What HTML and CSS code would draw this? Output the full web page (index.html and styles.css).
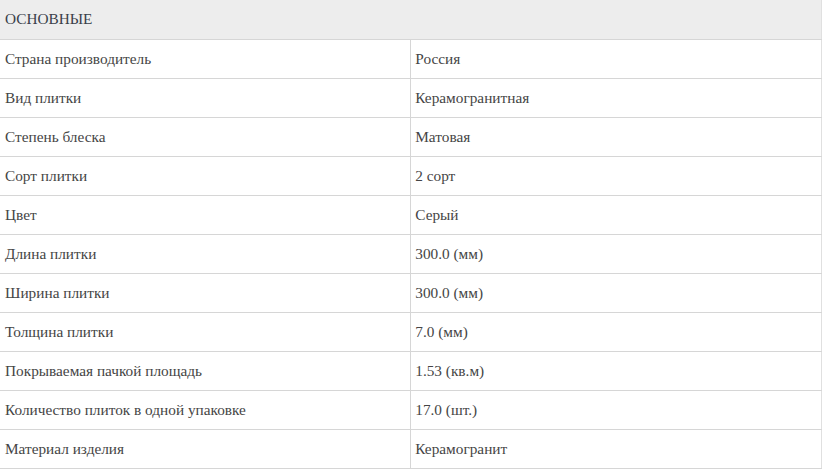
FILE: index.html
```html
<!DOCTYPE html>
<html lang="ru">
<head>
<meta charset="utf-8">
<link rel="stylesheet" href="styles.css">
</head>
<body>
<table class="specs">
  <thead>
    <tr><th colspan="2" class="group">ОСНОВНЫЕ</th></tr>
  </thead>
  <tbody>
    <tr><td class="name">Страна производитель</td><td class="val">Россия</td></tr>
    <tr><td class="name">Вид плитки</td><td class="val">Керамогранитная</td></tr>
    <tr><td class="name">Степень блеска</td><td class="val">Матовая</td></tr>
    <tr><td class="name">Сорт плитки</td><td class="val">2 сорт</td></tr>
    <tr><td class="name">Цвет</td><td class="val">Серый</td></tr>
    <tr><td class="name">Длина плитки</td><td class="val">300.0 (мм)</td></tr>
    <tr><td class="name">Ширина плитки</td><td class="val">300.0 (мм)</td></tr>
    <tr><td class="name">Толщина плитки</td><td class="val">7.0 (мм)</td></tr>
    <tr><td class="name">Покрываемая пачкой площадь</td><td class="val">1.53 (кв.м)</td></tr>
    <tr><td class="name">Количество плиток в одной упаковке</td><td class="val">17.0 (шт.)</td></tr>
    <tr><td class="name">Материал изделия</td><td class="val">Керамогранит</td></tr>
  </tbody>
</table>
</body>
</html>
```
FILE: styles.css
```css
html, body {
  margin: 0;
  padding: 0;
  background: #fff;
}
.specs {
  width: 822px;
  border-collapse: collapse;
  table-layout: fixed;
  font-family: "Liberation Serif", serif;
  font-size: 15.3px;
  color: #454545;
}
.specs th.group {
  background: #ededed;
  text-align: left;
  font-weight: normal;
  color: #3a3f4a;
  height: 39px;
  padding: 0 5px;
  box-sizing: border-box;
  border-right: 1px solid #e0e0e0;
  border-bottom: 1px solid #d6d6d6;
}
.specs td {
  height: 39px;
  box-sizing: border-box;
  padding: 0 5px;
  border-bottom: 1px solid #d6d6d6;
}
.specs td.name {
  width: 410px;
  border-right: 1px solid #d6d6d6;
}
.specs td.val {
  padding-left: 4px;
  border-right: 1px solid #e0e0e0;
}
```
